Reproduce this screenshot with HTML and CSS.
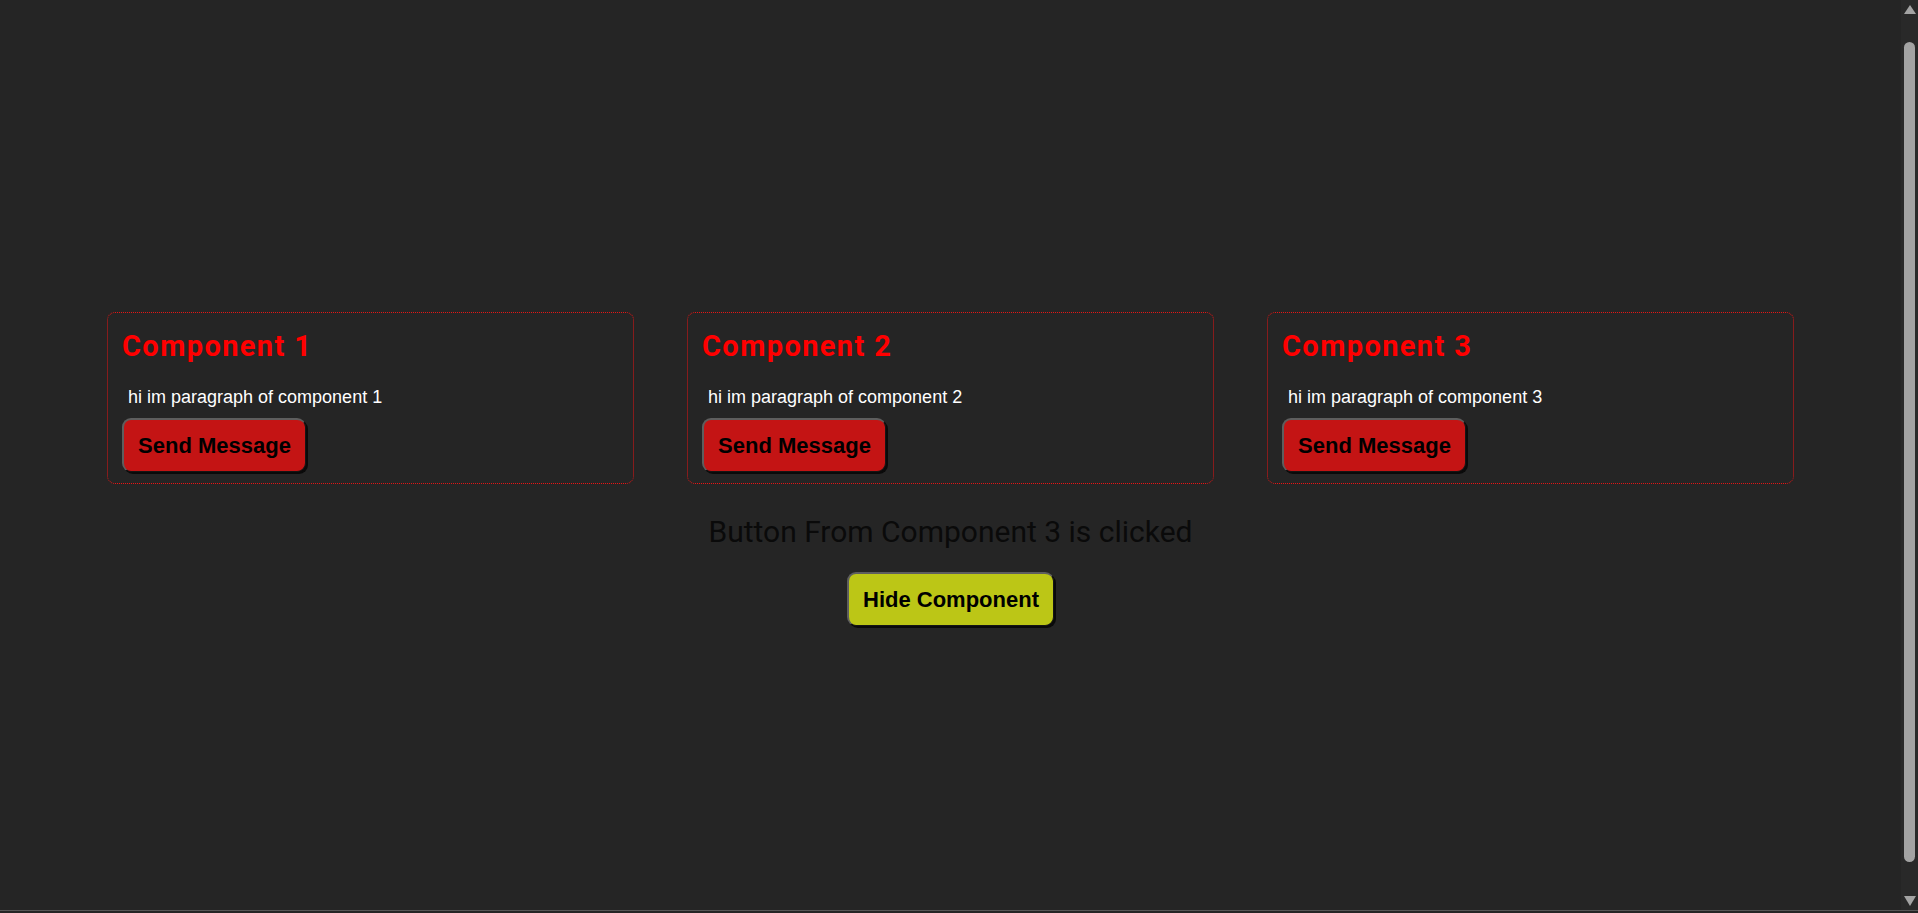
FILE: index.html
```html
<!DOCTYPE html>
<html lang="en">
<head>
<meta charset="utf-8">
<title>Components</title>
<link rel="stylesheet" href="styles.css">
</head>
<body>
<div class="page">
  <div class="app">
    <div class="cards">
      <div class="card">
        <h2 class="card-title">Component 1</h2>
        <p class="card-text">hi im paragraph of component 1</p>
        <button class="btn btn-send">Send Message</button>
      </div>
      <div class="card">
        <h2 class="card-title">Component 2</h2>
        <p class="card-text">hi im paragraph of component 2</p>
        <button class="btn btn-send">Send Message</button>
      </div>
      <div class="card">
        <h2 class="card-title">Component 3</h2>
        <p class="card-text">hi im paragraph of component 3</p>
        <button class="btn btn-send">Send Message</button>
      </div>
    </div>
    <p class="status">Button From Component 3 is clicked</p>
    <button class="btn btn-hide">Hide Component</button>
  </div>
  <div class="scrollbar" aria-hidden="true">
    <svg class="sb-arrow" width="12" height="9" viewBox="0 0 12 9"><polygon points="6,0 12,9 0,9" fill="#a3a3a3"/></svg>
    <div class="sb-thumb"></div>
    <svg class="sb-arrow sb-arrow-down" width="12" height="10" viewBox="0 0 12 10"><polygon points="0,0 12,0 6,10" fill="#a3a3a3"/></svg>
  </div>
</div>
</body>
</html>
```
FILE: styles.css
```css
html, body {
  margin: 0;
  padding: 0;
  background: #252525;
  overflow: hidden;
}

.page {
  display: flex;
  height: 910px;
  border-bottom: 1px solid #575757;
}

.app {
  flex: 1;
  display: flex;
  flex-direction: column;
  align-items: center;
  padding-top: 312px;
  font-family: "Liberation Sans", Arial, sans-serif;
}

.cards {
  display: flex;
  justify-content: center;
  gap: 53px;
  width: 100%;
}

.card {
  box-sizing: border-box;
  width: 527px;
  height: 172px;
  border: 1px dotted #e81515;
  border-radius: 8px;
  padding: 16px 14px 0 14px;
  display: flex;
  flex-direction: column;
  align-items: flex-start;
}

.card-title {
  margin: 0;
  font-family: Roboto, sans-serif;
  font-weight: 700;
  font-size: 29px;
  letter-spacing: 1.4px;
  line-height: 34px;
  color: #ff0000;
}

.card-text {
  margin: 24px 0 0 6px;
  font-size: 18px;
  line-height: 21px;
  color: #ffffff;
}

.btn {
  box-sizing: border-box;
  height: 54px;
  padding: 0 13px;
  font-family: "Liberation Sans", Arial, sans-serif;
  font-weight: 700;
  font-size: 22px;
  color: #000;
  border-radius: 9px;
  border-style: solid;
  border-width: 2px 1px 1px 2px;
  border-color: #5e5e5e #151515 #151515 #5e5e5e;
  box-shadow: 2px 2px 0 #0a0a0a;
  cursor: pointer;
}

.btn-send {
  margin-top: 10px;
  background: #c41414;
  width: 184px;
}

.btn-hide {
  background: #bcc616;
  width: 207px;
}

.status {
  margin: 30px 0 23px;
  font-family: Roboto, sans-serif;
  font-size: 30px;
  line-height: 35px;
  color: #0a0a0a;
}

.scrollbar {
  width: 17px;
  background: #292929;
  display: flex;
  flex-direction: column;
  align-items: center;
  padding-top: 5px;
  box-sizing: border-box;
}

.sb-arrow {
  display: block;
  flex: none;
}

.sb-thumb {
  width: 11px;
  height: 820px;
  margin-top: 28px;
  background: #a3a3a3;
  border-radius: 6px;
  flex: none;
}

.sb-arrow-down {
  margin-top: 34px;
}
```
